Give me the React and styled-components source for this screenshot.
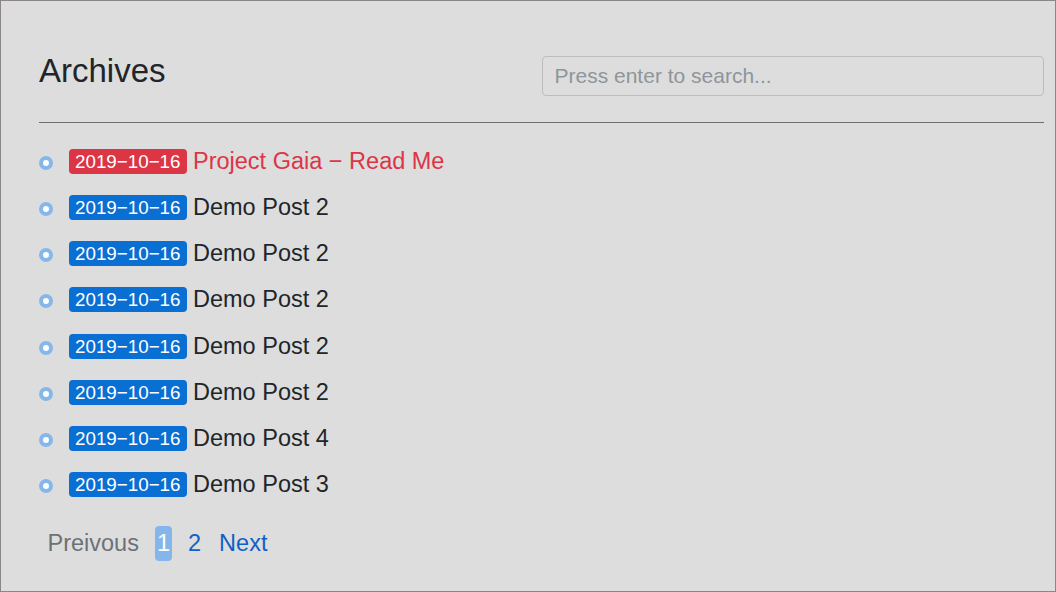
import styled, { createGlobalStyle } from "styled-components";

const GlobalStyle = createGlobalStyle`
  html, body {
    margin: 0;
    padding: 0;
    background: #dddddd;
  }
  * {
    box-sizing: border-box;
  }
`;

const Page = styled.div`
  width: 1056px;
  height: 592px;
  border: 1px solid #8b8687;
  background: #dddddd;
  padding: 50px 11px 0 38px;
  font-family: "Liberation Sans", Arial, sans-serif;
  color: #212529;
  overflow: hidden;
`;

const Header = styled.div`
  display: grid;
  grid-template-columns: 1fr 1fr;
  align-items: start;
`;

const Title = styled.h1`
  margin: 0;
  font-size: 33px;
  font-weight: 400;
  line-height: 1.2;
`;

const Search = styled.input`
  margin-top: 5px;
  width: 100%;
  height: 40px;
  padding: 0 12px;
  border: 1px solid #bcbcbc;
  border-radius: 4px;
  background: transparent;
  font-family: inherit;
  font-size: 21px;
  color: #333;
  outline: none;

  &::placeholder {
    color: #8e959b;
  }
`;

const Rule = styled.hr`
  margin: 26px 0 0;
  border: 0;
  border-top: 1px solid #6b7075;
`;

const List = styled.ul`
  list-style: none;
  margin: 15px 0 0;
  padding: 0;
`;

const Item = styled.li`
  display: flex;
  align-items: center;
  height: 46.28px;
  font-size: 23.5px;
`;

const Bullet = styled.span`
  width: 14px;
  height: 14px;
  border-radius: 50%;
  border: 4px solid #86b7ea;
  background: #ffffff;
  margin: 3px 16px 0 0;
  flex-shrink: 0;
`;

const Badge = styled.span`
  display: inline-block;
  font-size: 18.8px;
  line-height: 21px;
  padding: 2px 6px;
  border-radius: 4px;
  color: #ffffff;
  background: ${(p) => (p.$hot ? "#dc3545" : "#0a6fd3")};
`;

const PostTitle = styled.a`
  margin-left: 6.5px;
  color: ${(p) => (p.$hot ? "#dc3545" : "#212529")};
  text-decoration: none;
`;

const Pager = styled.nav`
  display: flex;
  align-items: center;
  gap: 15px;
  margin: 18px 0 0 7px;
  font-size: 23.5px;
  line-height: 34.5px;
`;

const PageLink = styled.a`
  padding: 0 1.5px;
  border-radius: 4px;
  text-decoration: none;
  color: ${(p) => (p.$disabled ? "#6c7177" : p.$active ? "#ffffff" : "#1060c8")};
  background: ${(p) => (p.$active ? "#85b6ea" : "transparent")};
`;

const posts = [
  { date: "2019−10−16", title: "Project Gaia − Read Me", hot: true },
  { date: "2019−10−16", title: "Demo Post 2" },
  { date: "2019−10−16", title: "Demo Post 2" },
  { date: "2019−10−16", title: "Demo Post 2" },
  { date: "2019−10−16", title: "Demo Post 2" },
  { date: "2019−10−16", title: "Demo Post 2" },
  { date: "2019−10−16", title: "Demo Post 4" },
  { date: "2019−10−16", title: "Demo Post 3" },
];

const App = () => {
  return (
    <>
      <GlobalStyle />
      <Page>
        <Header>
          <Title>Archives</Title>
          <Search placeholder="Press enter to search..." />
        </Header>
        <Rule />
        <List>
          {posts.map((post, i) => (
            <Item key={i}>
              <Bullet />
              <Badge $hot={post.hot}>{post.date}</Badge>
              <PostTitle $hot={post.hot}>{post.title}</PostTitle>
            </Item>
          ))}
        </List>
        <Pager>
          <PageLink $disabled>Preivous</PageLink>
          <PageLink $active>1</PageLink>
          <PageLink>2</PageLink>
          <PageLink>Next</PageLink>
        </Pager>
      </Page>
    </>
  );
};

export default App;
